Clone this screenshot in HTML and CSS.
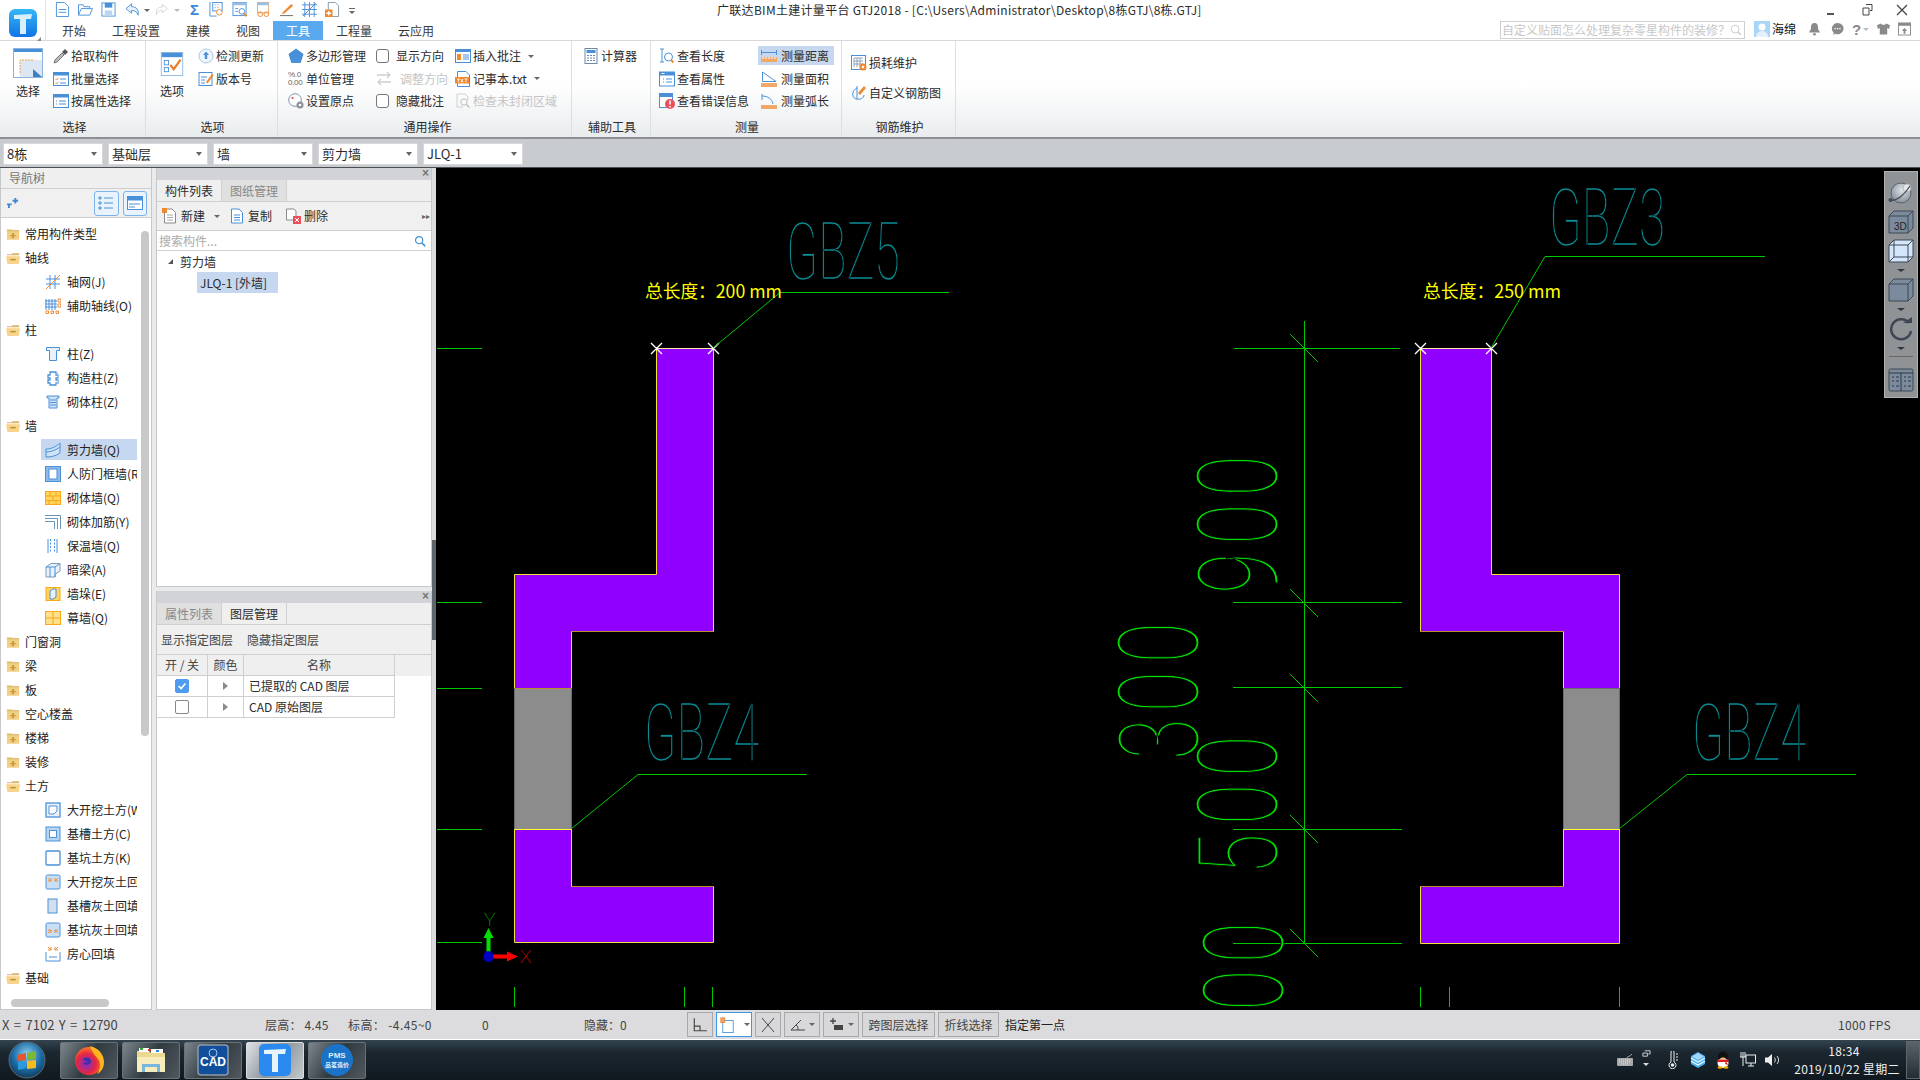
FILE: index.html
```html
<!DOCTYPE html>
<html lang="zh">
<head>
<meta charset="utf-8">
<title>广联达BIM土建计量平台 GTJ2018</title>
<link rel="stylesheet" href="styles.css">
</head>
<body>
<svg class="defs" aria-hidden="true">
  <defs>
    <linearGradient id="logoG" x1="0" y1="0" x2="0" y2="1"><stop offset="0" stop-color="#35b7f5"/><stop offset="1" stop-color="#1173e6"/></linearGradient>
    <radialGradient id="orbG" cx=".5" cy=".35" r=".7"><stop offset="0" stop-color="#8fd0ee"/><stop offset=".55" stop-color="#1d6ea8"/><stop offset="1" stop-color="#0e3350"/></radialGradient>
    <radialGradient id="foxG" cx=".4" cy=".6" r=".7"><stop offset="0" stop-color="#7b2fd0"/><stop offset=".5" stop-color="#e6263f"/><stop offset="1" stop-color="#ff9a1f"/></radialGradient>
    <radialGradient id="sphG" cx=".55" cy=".35" r=".7"><stop offset="0" stop-color="#dfe3e7"/><stop offset="1" stop-color="#7f8b97"/></radialGradient>
    <symbol id="fo" viewBox="0 0 16 14"><path d="M1 3h5l1-1h7v2H1z" fill="#d9b569"/><path d="M0 5h15l-1.500 8.500H1.500z" fill="#f6d58a"/><rect x="4.500" y="8" width="6" height="1.500" fill="#b98f3d"/></symbol>
    <symbol id="fc" viewBox="0 0 16 14"><path d="M1 2h5l1 1h7v10H1z" fill="#f2cf85"/><rect x="1" y="3" width="13" height="1" fill="#d9b569"/><path d="M6.500 6h2v2h2v1.500h-2v2h-2v-2h-2V8h2z" fill="#c89a3c"/></symbol>
    <symbol id="t-grid" viewBox="0 0 16 16"><path d="M5 1v14M10 1v14M1 5h14M1 10h14" stroke="#4a90d9" fill="none"/><path d="M1 15L15 1" stroke="#f08a30"/></symbol>
    <symbol id="t-agrid" viewBox="0 0 16 16"><path d="M1 1v11M4 1v11M7 1v11M10 1v11M0 3h12M0 6h12M0 9h12" stroke="#4a90d9" fill="none"/><path d="M13 1h3v3h-3zM13 6h3v3h-3zM1 13h2.500v2.500H1zM6 13h2.500v2.500H6zM11 13h2.500v2.500H11z" fill="none" stroke="#f08a30"/></symbol>
    <symbol id="t-col" viewBox="0 0 16 16"><path d="M1.500 1.500h13v3h-3v10h-7v-10h-3z" fill="#e9f2fb" stroke="#4a90d9"/></symbol>
    <symbol id="t-gcol" viewBox="0 0 16 16"><path d="M5 2h6v3h2v3h-2v2h2v3h-2v2H5v-2H3v-3h2V8H3V5h2z" fill="none" stroke="#4a90d9" stroke-width="1.300"/><path d="M11 1c3 1 3 12 0 14" fill="none" stroke="#b9d3ee"/></symbol>
    <symbol id="t-mcol" viewBox="0 0 16 16"><path d="M2 2h12v2h-2v10H4V4H2z" fill="#cfe2f6" stroke="#4a90d9"/><path d="M5 6h6M5 8.500h6M5 11h6" stroke="#4a90d9"/></symbol>
    <symbol id="t-wall" viewBox="0 0 16 16"><path d="M1 7c5 0 10-2 14-6v10c-4 3-9 4-14 4z" fill="#cfe2f6" stroke="#4a90d9"/><path d="M1 10c5 0 10-2 14-5" fill="none" stroke="#4a90d9"/></symbol>
    <symbol id="t-door" viewBox="0 0 16 16"><rect x=".5" y=".5" width="15" height="15" fill="#8fbbe8" stroke="#4a90d9"/><rect x="4" y="3" width="8" height="10" fill="#fff" stroke="#4a90d9"/></symbol>
    <symbol id="t-brick" viewBox="0 0 16 16"><rect x=".5" y="1.500" width="15" height="13" fill="#ffd35c" stroke="#f7a81b"/><path d="M.5 6h15M.5 10.500h15M5 1.500V6M11 1.500V6M8 6v4.500M4 10.500v4M11 10.500v4" stroke="#f7a81b" fill="none"/></symbol>
    <symbol id="t-bar" viewBox="0 0 16 16"><path d="M0 1.500h15.500V15M0 4.500h12.500V15M0 7.500h9.500V15" fill="none" stroke="#6a95bd"/></symbol>
    <symbol id="t-ins" viewBox="0 0 16 16"><path d="M3 1v14M12 1v14" stroke="#4a90d9"/><path d="M5.500 1v14M9.500 1v14" stroke="#4a90d9" stroke-dasharray="2 1.500"/></symbol>
    <symbol id="t-beam" viewBox="0 0 16 16"><path d="M1 5l5-3.500h9V9l-5 3.500v2.500H1z" fill="#e9f2fb" stroke="#7d9cbc"/><path d="M1 5h9v10M10 5l5-3.500M5 5v10" fill="none" stroke="#4a90d9"/></symbol>
    <symbol id="t-pier" viewBox="0 0 16 16"><rect x="1" y="1.500" width="14" height="13" fill="#ffd35c" stroke="#f7a81b"/><path d="M5 5l3-2h3v8l-3 2H5z" fill="#e9f2fb" stroke="#4a90d9"/></symbol>
    <symbol id="t-cw" viewBox="0 0 16 16"><rect x=".5" y="1.500" width="15" height="13" fill="#ffe08a" stroke="#f7a81b"/><path d="M8 1.500v13M.5 8h15" stroke="#f7a81b"/></symbol>
    <symbol id="t-e1" viewBox="0 0 16 16"><rect x="1" y="1" width="14" height="14" fill="#e9f2fb" stroke="#4a90d9" stroke-width="1.300"/><path d="M4 4h8v5l-3 3H4z" fill="#fff" stroke="#4a90d9"/></symbol>
    <symbol id="t-e2" viewBox="0 0 16 16"><rect x="1" y="1" width="14" height="14" fill="#b9d4f0" stroke="#4a90d9"/><rect x="4.500" y="4.500" width="7" height="7" fill="#fff" stroke="#4a90d9"/></symbol>
    <symbol id="t-e3" viewBox="0 0 16 16"><rect x="1" y="1" width="14" height="14" rx="1" fill="#fff" stroke="#4a90d9" stroke-width="1.300"/></symbol>
    <symbol id="t-e4" viewBox="0 0 16 16"><rect x="1" y="1" width="14" height="14" rx="1.500" fill="#c9dff5" stroke="#4a90d9"/><path d="M3 4l3 3M6 4v3H3M13 4l-3 3M10 4v3h3" fill="none" stroke="#f08a30"/></symbol>
    <symbol id="t-e5" viewBox="0 0 16 16"><rect x="3" y="1" width="9" height="14" fill="#d4dfec" stroke="#4a90d9"/></symbol>
    <symbol id="t-e6" viewBox="0 0 16 16"><rect x="1" y="1" width="14" height="14" rx="1.500" fill="#c9dff5" stroke="#4a90d9"/><path d="M3 11l3-3M3 8h3v3M13 11l-3-3M13 8h-3v3" fill="none" stroke="#f08a30"/></symbol>
    <symbol id="t-e7" viewBox="0 0 16 16"><path d="M1 6v9h14V6M4 11h8" fill="none" stroke="#4a90d9"/><path d="M3 1l3 3M6 1v3H3M13 1l-3 3M10 1v3h3" fill="none" stroke="#f08a30"/></symbol>
    <symbol id="r-pick" viewBox="0 0 16 16"><path d="M1 15l1-3 7-7 2 2-7 7z" fill="#bbb" stroke="#777"/><path d="M9 4l3-3 3 3-3 3z" fill="#555"/></symbol>
    <symbol id="r-batch" viewBox="0 0 16 16"><rect x=".5" y="1.500" width="15" height="13" fill="#fff" stroke="#4a90d9"/><rect x=".5" y="1.500" width="15" height="3" fill="#4a90d9"/><path d="M2.500 8l1 1 2-2M2.500 12l1 1 2-2" fill="none" stroke="#f08a30"/><path d="M7 8h6M7 12h6" stroke="#4a90d9"/></symbol>
    <symbol id="r-prop" viewBox="0 0 16 16"><rect x=".5" y="1.500" width="15" height="13" fill="#fff" stroke="#4a90d9"/><rect x=".5" y="1.500" width="15" height="3" fill="#4a90d9"/><path d="M3 8h1M3 11h1M6 8h7M6 11h7" stroke="#4a90d9"/></symbol>
    <symbol id="r-up" viewBox="0 0 16 16"><circle cx="8" cy="8" r="7" fill="#eef5fc" stroke="#a8c9ea"/><path d="M8 3.500l3 3.500H9.200v4H6.800V7H5z" fill="#4a90d9"/></symbol>
    <symbol id="r-ver" viewBox="0 0 16 16"><rect x="1" y="1.500" width="13" height="13" fill="#fff" stroke="#4a90d9"/><path d="M3 6h6M3 9h4M3 12h4" stroke="#4a90d9"/><path d="M8 11l6-8 1.500 1.500-6 8z" fill="#f08a30"/></symbol>
    <symbol id="r-poly" viewBox="0 0 16 16"><path d="M8 .5l7.500 5.500-2.800 9H3.300L.5 6z" fill="#4a90d9"/></symbol>
    <symbol id="r-orig" viewBox="0 0 16 16"><circle cx="7" cy="7" r="6.300" fill="#fff" stroke="#8095a8"/><circle cx="4.500" cy="5" r="1.100" fill="#e04040"/><circle cx="12" cy="12" r="3.500" fill="#8c9298"/><circle cx="12" cy="12" r="1.300" fill="#fff"/></symbol>
    <symbol id="r-adj" viewBox="0 0 16 16"><path d="M1 4h13M11 1l3 3-3 3M15 11H2M5 8l-3 3 3 3" fill="none" stroke="#cfcfcf" stroke-width="1.300"/></symbol>
    <symbol id="r-ins" viewBox="0 0 16 16"><rect x=".5" y="1.500" width="15" height="13" fill="#fff" stroke="#4a90d9"/><rect x="1" y="2" width="14" height="2" fill="#4a90d9"/><path d="M2 6h4v6H2z" fill="#f08a30"/><path d="M8 7h6M8 9h6M8 11h6" stroke="#4a90d9"/></symbol>
    <symbol id="r-txt" viewBox="0 0 16 16"><path d="M2.500.5H11l3.500 3.500v11.500h-12z" fill="#fff" stroke="#4a90d9"/><rect x="0" y="6" width="14" height="6.500" fill="#f08a30"/><path d="M2 8h3M3.500 8v3.500M6 8l2 3.500M8 8l-2 3.500M9.500 8h3M11 8v3.500" stroke="#fff" fill="none" stroke-width=".800"/></symbol>
    <symbol id="r-scan" viewBox="0 0 16 16"><path d="M2 1h8l3 3v3M2 1v13h6" fill="none" stroke="#cfcfcf"/><circle cx="9" cy="9" r="3.200" fill="none" stroke="#bdbdbd"/><path d="M11.500 11.500l3 3" stroke="#bdbdbd" stroke-width="1.500"/></symbol>
    <symbol id="r-calc" viewBox="0 0 16 16"><rect x="2" y=".5" width="12" height="15" fill="#fff" stroke="#6c8aa8"/><rect x="3.500" y="2" width="9" height="3" fill="#4a90d9"/><path d="M4 7.500h2M7 7.500h2M10 7.500h2M4 10h2M7 10h2M10 10h2M4 12.500h2M7 12.500h2M10 12.500h2" stroke="#6c8aa8"/></symbol>
    <symbol id="r-len" viewBox="0 0 16 16"><path d="M1 1h4M3 1v13M1 14h4" fill="none" stroke="#4a90d9"/><circle cx="9.500" cy="9" r="4" fill="#fff" stroke="#4a90d9"/><path d="M12 12l2.500 2.500" stroke="#f08a30" stroke-width="2"/></symbol>
    <symbol id="r-view" viewBox="0 0 16 16"><rect x=".5" y="1" width="15" height="14" fill="#fff" stroke="#4a90d9"/><rect x=".5" y="1" width="15" height="3.500" fill="#4a90d9"/><rect x="2.500" y="2" width="3" height="1" fill="#fff"/><path d="M4 8h1M4 11h1M7 8h6M7 11h6" stroke="#4a90d9"/></symbol>
    <symbol id="r-err" viewBox="0 0 16 16"><rect x=".5" y=".5" width="13" height="14" fill="#fff" stroke="#4a90d9"/><rect x=".5" y=".5" width="13" height="3.500" fill="#4a90d9"/><circle cx="11" cy="11" r="5" fill="#e8505a"/><path d="M11 7.500v4M11 13v1.500" stroke="#fff" stroke-width="1.500"/></symbol>
    <symbol id="r-dist" viewBox="0 0 16 16"><path d="M.5 2v5M15.500 2v5M.5 4.500h15" fill="none" stroke="#4a90d9"/><rect x="0" y="9" width="16" height="5" fill="#f1a868"/><path d="M2 9v2M5 9v2M8 9v2M11 9v2M14 9v2" stroke="#fff"/></symbol>
    <symbol id="r-area" viewBox="0 0 16 16"><path d="M1.500 1v9.500H15z" fill="#fff" stroke="#4a90d9"/><rect x="0" y="12" width="16" height="4" fill="#f1a868"/></symbol>
    <symbol id="r-arc" viewBox="0 0 16 16"><path d="M1 1v6M1 3c6 0 10 3 11 8" fill="none" stroke="#4a90d9"/><rect x="0" y="12" width="16" height="4" fill="#f1a868"/></symbol>
    <symbol id="r-loss" viewBox="0 0 16 16"><rect x=".5" y=".5" width="14" height="14" fill="#fff" stroke="#4a90d9"/><path d="M3 3v9M6 3v9M9 3v9M3 3h9M3 6h9M3 9h9" stroke="#8da2b8" fill="none"/><circle cx="12" cy="12" r="3.500" fill="#f08a30"/><circle cx="12" cy="12" r="1.300" fill="#fff"/></symbol>
    <symbol id="r-reb" viewBox="0 0 16 16"><path d="M6 3C1 5 0 12 5 14c4 1 8-1 8-4" fill="none" stroke="#4a90d9"/><path d="M6 1v13" stroke="#4a90d9"/><path d="M7 8l6-7 2 2-6 7z" fill="#f08a30"/></symbol>
  </defs>
</svg>

<div class="app">
  <header class="top">
    <div class="logo-col">
      <svg class="logo" viewBox="0 0 30 30"><rect x="1" width="28" height="28" rx="6" fill="url(#logoG)"/><path d="M6 6l18-1-1 5-5 0v15h-6V10H6z" fill="#d6f0fb"/></svg>
      <span class="logo-grip"></span>
    </div>
    <div class="top-main">
      <div class="title-row">
        <div class="quick">
          <svg class="q" viewBox="0 0 16 16"><path d="M1.500.5H10l4.500 4.500v10.500h-13z" fill="#fff" stroke="#4a90d9"/><path d="M4 8h8M4 11h8" stroke="#4a90d9"/></svg>
          <svg class="q" viewBox="0 0 16 16"><path d="M.5 14V3h5l1 2h6v2" fill="none" stroke="#4a90d9"/><path d="M.5 14l3-7h12l-3 7z" fill="#fff" stroke="#4a90d9"/></svg>
          <svg class="q" viewBox="0 0 16 16"><rect x="1" y="1" width="14" height="14" fill="#fff" stroke="#4a90d9"/><rect x="4" y="1" width="8" height="5" fill="#4a90d9"/><rect x="4" y="9" width="8" height="6" fill="#bcd6f0"/></svg>
          <svg class="q q-undo" viewBox="0 0 18 16"><path d="M8 2L2 7l6 5V9c4 0 6 2 7 5 1-6-2-9-7-9z" fill="#e9f2fb" stroke="#4a90d9"/></svg>
          <i class="caret"></i>
          <svg class="q q-redo" viewBox="0 0 18 16"><path d="M10 2l6 5-6 5V9c-4 0-6 2-7 5-1-6 2-9 7-9z" fill="#fff" stroke="#cfcfcf"/></svg>
          <i class="caret light"></i>
          <span class="q-sigma">Σ</span>
          <svg class="q q-7" viewBox="0 0 16 16"><path d="M1 0v15h7" fill="none" stroke="#4a90d9"/><rect x="4" y=".5" width="10" height="9" fill="#fff" stroke="#4a90d9"/><path d="M6 3h1M9 3h1M6 6h1M9 6h1" stroke="#4a90d9"/><circle cx="11" cy="11" r="3" fill="#fff" stroke="#f08a30"/></svg>
          <svg class="q q-8" viewBox="0 0 16 16"><rect x=".5" y=".5" width="14" height="14" fill="#fff" stroke="#4a90d9"/><rect x=".5" y=".5" width="14" height="3" fill="#9bbfe3"/><path d="M3 7h3M3 10h3" stroke="#4a90d9"/><circle cx="10" cy="10" r="3" fill="#fff" stroke="#4a90d9"/><path d="M12 12l3 3" stroke="#f08a30" stroke-width="2"/></svg>
          <svg class="q q-9" viewBox="0 0 16 16"><rect x="1.500" y=".5" width="12" height="11" fill="#fff" stroke="#e8a873"/><rect x="1.500" y=".5" width="12" height="3" fill="#9bbfe3"/><circle cx="4.500" cy="13" r="2.500" fill="none" stroke="#f08a30"/><circle cx="11" cy="13" r="2.500" fill="none" stroke="#f08a30"/></svg>
          <svg class="q q-10" viewBox="0 0 16 16"><path d="M1 14.500h14" stroke="#666"/><path d="M4 11L13 2l2 2-9 8-3 1z" fill="#f08a30"/></svg>
          <svg class="q q-11" viewBox="0 0 16 16"><path d="M3 0v16M8 0v16M13 0v16M0 3h16M0 8h16M0 13h16" stroke="#4a90d9"/><path d="M1 15L15 1" stroke="#4a90d9"/></svg>
          <svg class="q q-12" viewBox="0 0 16 16"><path d="M3.500.5H11l3.500 3.500v11.500h-11z" fill="#fff" stroke="#8097ad"/><rect x="0" y="8" width="8" height="8" fill="#f08a30"/><path d="M4 9.500v5M1.500 12h5" stroke="#fff" stroke-width="1.500"/></svg>
          <i class="more"></i>
        </div>
        <div class="title">广联达BIM土建计量平台 GTJ2018 - [C:\Users\Administrator\Desktop\8栋GTJ\8栋.GTJ]</div>
        <div class="win">
          <svg class="win-b" viewBox="0 0 14 14"><rect x="2" y="10" width="7" height="2" fill="#555"/></svg>
          <svg class="win-b" viewBox="0 0 14 14"><path d="M5 1.500h6v6H9M2 5h6v7H2z" fill="#fff" stroke="#444"/></svg>
          <svg class="win-b" viewBox="0 0 14 14"><path d="M2 2l10 10M12 2L2 12" stroke="#444" stroke-width="1.300"/></svg>
        </div>
      </div>
      <div class="tab-row">
        <nav class="tabs">
          <span class="tab">开始</span><span class="tab">工程设置</span><span class="tab">建模</span><span class="tab">视图</span><span class="tab active">工具</span><span class="tab">工程量</span><span class="tab">云应用</span>
        </nav>
        <div class="search">
          <span class="search-t">自定义贴面怎么处理复杂零星构件的装修？</span>
          <svg class="search-i" viewBox="0 0 14 14"><circle cx="6" cy="6" r="4.500" fill="none" stroke="#c4c4c4"/><path d="M9.500 9.500l3 3" stroke="#c4c4c4" stroke-width="1.500"/></svg>
        </div>
        <svg class="avatar" viewBox="0 0 16 16"><rect width="16" height="16" fill="#a9d6f7"/><circle cx="8" cy="6" r="3.500" fill="#fff"/><path d="M2 16c0-4 3-6 6-6s6 2 6 6z" fill="#e2f1fc"/></svg>
        <span class="uname">海绵</span>
        <svg class="ti ti-bell" viewBox="0 0 14 16"><path d="M7 1c3 0 4 2 4 5 0 3 1 4 2 5v1H1v-1c1-1 2-2 2-5 0-3 1-5 4-5z" fill="#8a8a8a"/><circle cx="7" cy="14" r="1.500" fill="#8a8a8a"/></svg>
        <svg class="ti ti-chat" viewBox="0 0 16 16"><path d="M8 1a7 6.500 0 1 1-3 12.400L3 15l.6-3A7 6.500 0 0 1 8 1z" fill="#8a8a8a"/><path d="M4.500 7.500h1.500M7.300 7.500h1.500M10 7.500h1.500" stroke="#fff" stroke-width="1.500"/></svg>
        <span class="ti-q">?</span><i class="caret light ti-qc"></i>
        <svg class="ti ti-shirt" viewBox="0 0 14 14"><path d="M4 1L0 3l1 4 2-1v7h8V6l2 1 1-4-4-2c-1 2-5 2-6 0z" fill="#8a8a8a"/></svg>
        <svg class="ti ti-box" viewBox="0 0 14 14"><rect x=".5" y=".5" width="13" height="13" fill="#fff" stroke="#8a8a8a"/><rect x=".5" y=".5" width="13" height="3" fill="#8a8a8a"/><path d="M7 6l3 3H8v3H6V9H4z" fill="#8a8a8a"/></svg>
      </div>
    </div>
  </header>

  <section class="ribbon">
    <div class="grp g1">
      <div class="g-body">
        <div class="large lg1">
          <svg class="lg-i" viewBox="0 0 30 30"><rect x=".5" y=".5" width="29" height="29" fill="#fff" stroke="#8ab4dd"/><rect x="1" y="1" width="28" height="3" fill="#4a90d9"/><rect x="7" y="12" width="22" height="17" fill="#dde7f3"/><path d="M7 25V12h14" fill="none" stroke="#f2a444" stroke-dasharray="2 1"/><path d="M20 21l9 8h-9z" fill="#3f7fc4"/></svg>
          <span>选择</span>
        </div>
        <div class="col c1-2">
          <div class="it"><svg class="ic"><use href="#r-pick"/></svg><span>拾取构件</span></div>
          <div class="it"><svg class="ic"><use href="#r-batch"/></svg><span>批量选择</span></div>
          <div class="it"><svg class="ic"><use href="#r-prop"/></svg><span>按属性选择</span></div>
        </div>
      </div>
      <div class="g-label">选择</div>
    </div>
    <div class="grp g2">
      <div class="g-body">
        <div class="large lg2">
          <svg class="lg-i lg-i2" viewBox="0 0 26 28"><rect x=".5" y=".5" width="25" height="27" fill="#fff" stroke="#8ab4dd"/><rect x="1" y="1" width="24" height="5" fill="#4a90d9"/><rect x="4" y="10" width="5" height="5" fill="none" stroke="#4a90d9"/><rect x="4" y="18" width="5" height="5" fill="none" stroke="#4a90d9"/><path d="M11 15l4 5 8-11" fill="none" stroke="#e8792a" stroke-width="2.500"/></svg>
          <span>选项</span>
        </div>
        <div class="col c2-2">
          <div class="it"><svg class="ic"><use href="#r-up"/></svg><span>检测更新</span></div>
          <div class="it"><svg class="ic"><use href="#r-ver"/></svg><span>版本号</span></div>
        </div>
      </div>
      <div class="g-label">选项</div>
    </div>
    <div class="grp g3">
      <div class="g-body">
        <div class="col c3-1">
          <div class="it"><svg class="ic"><use href="#r-poly"/></svg><span>多边形管理</span></div>
          <div class="it"><span class="unit-ic">%.0<br>0.00</span><span>单位管理</span></div>
          <div class="it"><svg class="ic"><use href="#r-orig"/></svg><span>设置原点</span></div>
        </div>
        <div class="col c3-2">
          <div class="it it-w"><i class="chk"></i><span>显示方向</span></div>
          <div class="it it-w off"><svg class="ic"><use href="#r-adj"/></svg><span>调整方向</span></div>
          <div class="it it-w"><i class="chk"></i><span>隐藏批注</span></div>
        </div>
        <div class="col c3-3">
          <div class="it"><svg class="ic"><use href="#r-ins"/></svg><span>插入批注</span><i class="caret it-c"></i></div>
          <div class="it"><svg class="ic"><use href="#r-txt"/></svg><span>记事本.txt</span><i class="caret it-c"></i></div>
          <div class="it off"><svg class="ic"><use href="#r-scan"/></svg><span>检查未封闭区域</span></div>
        </div>
      </div>
      <div class="g-label">通用操作</div>
    </div>
    <div class="grp g4">
      <div class="g-body">
        <div class="col c4-1">
          <div class="it"><svg class="ic"><use href="#r-calc"/></svg><span>计算器</span></div>
        </div>
      </div>
      <div class="g-label">辅助工具</div>
    </div>
    <div class="grp g5">
      <div class="g-body">
        <div class="col c5-1">
          <div class="it"><svg class="ic"><use href="#r-len"/></svg><span>查看长度</span></div>
          <div class="it"><svg class="ic"><use href="#r-view"/></svg><span>查看属性</span></div>
          <div class="it"><svg class="ic"><use href="#r-err"/></svg><span>查看错误信息</span></div>
        </div>
        <div class="col c5-2">
          <div class="it sel"><svg class="ic"><use href="#r-dist"/></svg><span>测量距离</span></div>
          <div class="it"><svg class="ic"><use href="#r-area"/></svg><span>测量面积</span></div>
          <div class="it"><svg class="ic"><use href="#r-arc"/></svg><span>测量弧长</span></div>
        </div>
      </div>
      <div class="g-label">测量</div>
    </div>
    <div class="grp g6">
      <div class="g-body">
        <div class="col c6-1">
          <div class="it"><svg class="ic"><use href="#r-loss"/></svg><span>损耗维护</span></div>
          <div class="it"><svg class="ic"><use href="#r-reb"/></svg><span>自定义钢筋图</span></div>
        </div>
      </div>
      <div class="g-label">钢筋维护</div>
    </div>
  </section>

  <section class="combos">
    <div class="combo"><span>8栋</span><i class="caret"></i></div>
    <div class="combo"><span>基础层</span><i class="caret"></i></div>
    <div class="combo"><span>墙</span><i class="caret"></i></div>
    <div class="combo"><span>剪力墙</span><i class="caret"></i></div>
    <div class="combo"><span>JLQ-1</span><i class="caret"></i></div>
  </section>

  <main class="main">
    <aside class="nav">
      <div class="nav-head">导航树</div>
      <div class="nav-tools">
        <svg class="pin" viewBox="0 0 14 12"><path d="M0 6h5v2H3v3H1V8H0zM6 2h2V0h2v2h2v2h-2v2H8V4H6z" fill="#3f86d6"/></svg>
        <span class="nav-btn"><svg viewBox="0 0 16 14"><path d="M1 1h2v2H1zM1 6h2v2H1zM1 11h2v2H1z" fill="none" stroke="#4a90d9"/><path d="M6 2h9M6 7h9M6 12h9" stroke="#4a90d9"/></svg></span>
        <span class="nav-btn"><svg viewBox="0 0 16 14"><rect x=".5" y=".5" width="15" height="13" fill="#fff" stroke="#4a90d9"/><rect x=".5" y=".5" width="15" height="4" fill="#4a90d9"/><path d="M2 8h11M2 11h6" stroke="#4a90d9"/></svg></span>
      </div>
      <div class="tree">
        <div class="tr root"><svg class="fd"><use href="#fc"/></svg><span>常用构件类型</span></div>
        <div class="tr root"><svg class="fd"><use href="#fo"/></svg><span>轴线</span></div>
        <div class="tr"><svg class="ic"><use href="#t-grid"/></svg><span>轴网(J)</span></div>
        <div class="tr"><svg class="ic"><use href="#t-agrid"/></svg><span>辅助轴线(O)</span></div>
        <div class="tr root"><svg class="fd"><use href="#fo"/></svg><span>柱</span></div>
        <div class="tr"><svg class="ic"><use href="#t-col"/></svg><span>柱(Z)</span></div>
        <div class="tr"><svg class="ic"><use href="#t-gcol"/></svg><span>构造柱(Z)</span></div>
        <div class="tr"><svg class="ic"><use href="#t-mcol"/></svg><span>砌体柱(Z)</span></div>
        <div class="tr root"><svg class="fd"><use href="#fo"/></svg><span>墙</span></div>
        <div class="tr on"><svg class="ic"><use href="#t-wall"/></svg><span>剪力墙(Q)</span></div>
        <div class="tr"><svg class="ic"><use href="#t-door"/></svg><span>人防门框墙(RF)</span></div>
        <div class="tr"><svg class="ic"><use href="#t-brick"/></svg><span>砌体墙(Q)</span></div>
        <div class="tr"><svg class="ic"><use href="#t-bar"/></svg><span>砌体加筋(Y)</span></div>
        <div class="tr"><svg class="ic"><use href="#t-ins"/></svg><span>保温墙(Q)</span></div>
        <div class="tr"><svg class="ic"><use href="#t-beam"/></svg><span>暗梁(A)</span></div>
        <div class="tr"><svg class="ic"><use href="#t-pier"/></svg><span>墙垛(E)</span></div>
        <div class="tr"><svg class="ic"><use href="#t-cw"/></svg><span>幕墙(Q)</span></div>
        <div class="tr root"><svg class="fd"><use href="#fc"/></svg><span>门窗洞</span></div>
        <div class="tr root"><svg class="fd"><use href="#fc"/></svg><span>梁</span></div>
        <div class="tr root"><svg class="fd"><use href="#fc"/></svg><span>板</span></div>
        <div class="tr root"><svg class="fd"><use href="#fc"/></svg><span>空心楼盖</span></div>
        <div class="tr root"><svg class="fd"><use href="#fc"/></svg><span>楼梯</span></div>
        <div class="tr root"><svg class="fd"><use href="#fc"/></svg><span>装修</span></div>
        <div class="tr root"><svg class="fd"><use href="#fo"/></svg><span>土方</span></div>
        <div class="tr"><svg class="ic"><use href="#t-e1"/></svg><span>大开挖土方(W)</span></div>
        <div class="tr"><svg class="ic"><use href="#t-e2"/></svg><span>基槽土方(C)</span></div>
        <div class="tr"><svg class="ic"><use href="#t-e3"/></svg><span>基坑土方(K)</span></div>
        <div class="tr"><svg class="ic"><use href="#t-e4"/></svg><span>大开挖灰土回填</span></div>
        <div class="tr"><svg class="ic"><use href="#t-e5"/></svg><span>基槽灰土回填</span></div>
        <div class="tr"><svg class="ic"><use href="#t-e6"/></svg><span>基坑灰土回填</span></div>
        <div class="tr"><svg class="ic"><use href="#t-e7"/></svg><span>房心回填</span></div>
        <div class="tr root"><svg class="fd"><use href="#fo"/></svg><span>基础</span></div>
      </div>
      <i class="vbar"></i>
      <i class="hbar"></i>
    </aside>

    <div class="mid">
      <section class="panel p-top">
        <div class="p-head"><i class="x">×</i></div>
        <div class="p-tabs"><span class="p-tab cur">构件列表</span><span class="p-tab">图纸管理</span></div>
        <div class="p-tools">
          <span class="pt"><svg class="ic" viewBox="0 0 16 16"><path d="M2.500 1H10l3.500 3.500V15h-11z" fill="#fff" stroke="#8a8a8a"/><path d="M5 7h6M5 9.500h6M5 12h6" stroke="#aaa"/><rect x="0" y="0" width="5" height="5" fill="#f08a30"/></svg><span>新建</span><i class="caret"></i></span>
          <span class="pt"><svg class="ic" viewBox="0 0 16 16"><path d="M2.500 1H10l3.500 3.500V15h-11z" fill="#fff" stroke="#4a90d9"/><path d="M5 7h6M5 9.500h6M5 12h6" stroke="#4a90d9"/></svg><span>复制</span></span>
          <span class="pt"><svg class="ic" viewBox="0 0 16 16"><path d="M1.500 1H9l2 2v9H1.500z" fill="#fff" stroke="#8a8a8a"/><rect x="8" y="8" width="8" height="8" fill="#e8505a"/><path d="M10 10l4 4M14 10l-4 4" stroke="#fff"/></svg><span>删除</span></span>
          <span class="p-more">▸▸</span>
        </div>
        <div class="p-search"><span>搜索构件...</span><svg class="p-s-i" viewBox="0 0 14 14"><circle cx="6" cy="6" r="4.200" fill="none" stroke="#3d8fd6" stroke-width="1.400"/><path d="M9 9l4 4" stroke="#3d8fd6" stroke-width="1.800"/></svg></div>
        <div class="p-tree">
          <div class="pn-root"><i class="tri"></i><span>剪力墙</span></div>
          <div class="pn-child">JLQ-1 [外墙]</div>
        </div>
      </section>
      <section class="panel p-bot">
        <div class="p-head"><i class="x">×</i></div>
        <div class="p-tabs"><span class="p-tab">属性列表</span><span class="p-tab cur">图层管理</span></div>
        <div class="layer-tools"><span>显示指定图层</span><span>隐藏指定图层</span></div>
        <div class="lt-head"><span class="lc1">开 / 关</span><span class="lc2">颜色</span><span class="lc3">名称</span></div>
        <div class="lt-row"><span class="lc1"><i class="box on"><svg viewBox="0 0 14 14"><path d="M3 7l3 3 5-6" fill="none" stroke="#fff" stroke-width="2"/></svg></i></span><span class="lc2"><i class="tri-r"></i></span><span class="lc3 left">已提取的 CAD 图层</span></div>
        <div class="lt-row"><span class="lc1"><i class="box"></i></span><span class="lc2"><i class="tri-r"></i></span><span class="lc3 left">CAD 原始图层</span></div>
      </section>
    </div>

    <div class="splitter"><i class="grip"></i></div>

    <div class="canvas">
      <svg class="cad" viewBox="436 168 1484 842" preserveAspectRatio="none">
        <g class="walls">
          <path class="p" d="M656.500 348.500H713.500V631.500H571.500V688.500H514.500V574.500H656.500Z"/>
          <rect class="g" x="514.500" y="688.500" width="57" height="141"/>
          <path class="p" d="M514.500 829.500H571.500V886.500H713.500V942.500H514.500Z"/>
          <path class="p" d="M1420.500 348.500H1491.500V574.500H1619.500V688.500H1563.500V631.500H1420.500Z"/>
          <rect class="g" x="1563.500" y="688.500" width="56" height="141"/>
          <path class="p" d="M1563.500 829.500H1619.500V943.500H1420.500V886.500H1563.500Z"/>
          <path class="ol" d="M571.500 631.500H713.500M571.500 886.500H713.500M1420.500 631.500H1563.500M1420.500 886.500H1563.500M514.500 688.500H571.500"/>
          <path class="yl" d="M514.500 829.500H571.500M1563.500 829.500H1619.500"/>
          <path class="wh" d="M656.500 348.500H713.500M1420.500 348.500H1491.500"/>
        </g>
        <g class="marks">
          <path d="M651 343l11 11M662 343l-11 11M708 343l11 11M719 343l-11 11M1415 343l11 11M1426 343l-11 11M1486 343l11 11M1497 343l-11 11"/>
        </g>
        <g class="ln">
          <path d="M437 348.500H482M437 602.500H482M437 688.500H482M437 829.500H482M437 942.500H482"/>
          <path d="M514.500 987V1007M684.500 987V1007M712.500 987V1007M1420.500 987V1007M1449.500 987V1007M1619.500 987V1007"/>
          <path d="M713 348L780 292.500H949"/>
          <path d="M1491 348L1545 256.500H1765"/>
          <path d="M571 829L638 774.500H807"/>
          <path d="M1619 829L1687 774.500H1856"/>
          <path d="M1304.500 321V943"/>
          <path d="M1234 348.500H1400M1233 602.500H1402M1233 687.500H1402M1233 829.500H1402M1233 943.500H1402"/>
          <path d="M1290 334l28 28M1290 589l28 28M1290 674l28 28M1290 815l28 28M1290 929l28 28"/>
        </g>
        <g class="lbl">
          <text x="786" y="279" textLength="114" lengthAdjust="spacingAndGlyphs">GBZ5</text>
          <text x="1549" y="245" textLength="116" lengthAdjust="spacingAndGlyphs">GBZ3</text>
          <text x="644" y="760" textLength="115" lengthAdjust="spacingAndGlyphs">GBZ4</text>
          <text x="1692" y="760" textLength="114" lengthAdjust="spacingAndGlyphs">GBZ4</text>
        </g>
        <g class="dim">
          <text transform="translate(1277 594) rotate(-90) scale(.68 1)" x="0 72 143">900</text>
          <text transform="translate(1198 760) rotate(-90) scale(.68 1)" x="0 70 142">300</text>
          <text transform="translate(1277 875) rotate(-90) scale(.68 1)" x="0 73 144">500</text>
          <text transform="translate(1283 1011) rotate(-90) scale(.68 1)" x="0 70">00</text>
        </g>
        <text class="len" x="645" y="298" textLength="137" lengthAdjust="spacingAndGlyphs">总长度：200 mm</text>
        <text class="len" x="1423" y="298" textLength="138" lengthAdjust="spacingAndGlyphs">总长度：250 mm</text>
        <g class="axis">
          <path class="ax-g" d="M488.500 956V938"/><path class="ax-gh" d="M488.500 928l5 10h-10z"/>
          <path class="ax-r" d="M490 956.500H507"/><path class="ax-rh" d="M518 956.500l-11-5v10z"/>
          <ellipse cx="488.500" cy="956.500" rx="5" ry="5.500" fill="#0000c0"/>
          <text class="ax-x" x="520" y="963">X</text><text class="ax-y" x="484" y="926">Y</text>
        </g>
      </svg>
      <div class="viewbar">
        <svg class="vb" viewBox="0 0 26 24"><circle cx="13" cy="12" r="10" fill="url(#sphG)" stroke="#5a636c"/><circle cx="19" cy="7" r="4" fill="#e6e8ea" stroke="#9aa2aa" stroke-width=".600"/><path d="M1 19c8 2 16-6 21-14" fill="none" stroke="#444c55" stroke-width="1.300"/><circle cx="2.500" cy="19" r="2" fill="#444c55"/></svg>
        <svg class="vb" viewBox="0 0 26 24"><path d="M1 6l5-5h19v17l-5 5H1z" fill="#7b8b9d" stroke="#3d4652"/><path d="M1 6h19v17M20 6l5-5" fill="none" stroke="#3d4652"/><text class="vb-t" x="6" y="20">3D</text></svg>
        <svg class="vb" viewBox="0 0 26 24"><path d="M1 6l5-5h19v17l-5 5H1z" fill="#d4e6fb" stroke="#3d4652"/><path d="M1 6h19v17M20 6l5-5M6 1v17h19M6 18l-5 5" fill="none" stroke="#3d4652"/></svg>
        <i class="vb-ar"></i>
        <svg class="vb" viewBox="0 0 26 24"><path d="M1 6l5-5h19v17l-5 5H1z" fill="#7b8b9d" stroke="#3d4652"/><path d="M1 6h19v17M20 6l5-5" fill="none" stroke="#3d4652"/></svg>
        <i class="vb-ar"></i>
        <svg class="vb" viewBox="0 0 26 24"><path d="M21 6A10 10 0 1 0 23 14" fill="none" stroke="#3d4652" stroke-width="2.500"/><path d="M15 6h9V0z" fill="#3d4652"/></svg>
        <i class="vb-ar"></i>
        <i class="vb-sep"></i>
        <svg class="vb" viewBox="0 0 26 24"><rect x="1" y="1" width="24" height="22" rx="1.500" fill="#7b8b9d" stroke="#3d4652"/><path d="M1 5h24M13 5v18M4 9h2M8 9h3M4 13h2M8 13h3M4 18h2M8 18h3M16 9h2M20 9h3M16 13h2M20 13h3M16 18h2M20 18h3" stroke="#2f3640"/></svg>
      </div>
    </div>
  </main>

  <footer class="status">
    <span class="st s-xy">X = 7102 Y = 12790</span>
    <span class="st s-h1">层高： 4.45</span>
    <span class="st s-h2">标高： -4.45~0</span>
    <span class="st s-0">0</span>
    <span class="st s-hide">隐藏：0</span>
    <span class="sb"><svg viewBox="0 0 14 14"><path d="M2 1v11h11M2 8h5v4" fill="none" stroke="#444"/></svg></span>
    <span class="sb sb-act"><svg viewBox="0 0 20 20"><rect x="3.500" y="4.500" width="13" height="15" fill="#fff" stroke="#3d87d8"/><rect x="1" y="1" width="5" height="6" fill="#f4a360" stroke="#e58b3e"/></svg><i class="caret"></i></span>
    <span class="sb"><svg viewBox="0 0 16 16"><path d="M2 1l12 14M14 1L2 15" stroke="#444" fill="none"/></svg></span>
    <span class="sb sb-w"><svg viewBox="0 0 16 14"><path d="M1 12L11 2M1 12h14" stroke="#444" fill="none"/><path d="M6 7c2 1 2 3 2 5" stroke="#444" fill="none"/></svg><i class="caret"></i></span>
    <span class="sb sb-w"><svg viewBox="0 0 16 14"><path d="M1 3h6M4 0v6" stroke="#444" fill="none" stroke-width="1.300"/><rect x="5" y="7" width="9" height="5" fill="#444"/></svg><i class="caret"></i></span>
    <span class="sb sb-t1">跨图层选择</span>
    <span class="sb sb-t2">折线选择</span>
    <span class="st s-prompt">指定第一点</span>
    <span class="st s-fps">1000 FPS</span>
  </footer>

  <footer class="taskbar">
    <svg class="orb" viewBox="0 0 38 38"><circle cx="19" cy="19" r="18" fill="url(#orbG)" stroke="#5a6a74"/><path d="M10 14l8-2v7l-8 1z" fill="#e8552c"/><path d="M19 12l9-2v8l-9 1z" fill="#7cb92f"/><path d="M10 21l8-1v7l-8 2z" fill="#2a9be0"/><path d="M19 20l9-1v8l-9 1z" fill="#f7bb20"/></svg>
    <div class="tb-btns">
      <span class="tb"><svg viewBox="0 0 32 32"><circle cx="16" cy="17" r="14" fill="url(#foxG)"/><path d="M17 2c8 2 14 8 14 16 0 6-3 10-7 12 4-5 4-11 1-15-2-3-5-5-8-13z" fill="#ffb51f"/><path d="M10 15c3-3 8-1 8 2 0 4-6 5-8 2l6-1c-3-1-5-1-6-3z" fill="#3c2fa8"/></svg></span>
      <span class="tb"><svg viewBox="0 0 32 32"><path d="M2 7h12l2 2h14v19H2z" fill="#ecd890"/><rect x="4" y="4" width="10" height="4" fill="#fff"/><rect x="16" y="5" width="12" height="4" fill="#fff"/><rect x="5" y="4" width="3" height="2" fill="#37a83a"/><rect x="13" y="5" width="3" height="2" fill="#d8362a"/><rect x="21" y="6" width="3" height="2" fill="#2b8ad8"/><path d="M2 13h28v15H2z" fill="#f7ecbc"/><path d="M7 20h18v8h-3v-5H10v5H7z" fill="#7ab6dc"/></svg></span>
      <span class="tb"><svg viewBox="0 0 32 32"><rect x="1" y="1" width="30" height="30" rx="3" fill="#114f9c" stroke="#8d9aa5" stroke-width="1.500"/><text class="tb-cad" x="16" y="22" text-anchor="middle">CAD</text><circle cx="16" cy="9" r="4" fill="none" stroke="#9ec8f2"/></svg></span>
      <span class="tb tb-on"><svg viewBox="0 0 32 32"><rect x="0" y="0" width="32" height="32" rx="5" fill="#2b8af0"/><path d="M5 6l22-1-1 5-7 0v18h-6V10H5z" fill="#e6f4fc"/></svg></span>
      <span class="tb"><svg viewBox="0 0 32 32"><circle cx="16" cy="16" r="16" fill="#1a73c8"/><text class="tb-pms" x="16" y="14" text-anchor="middle">PMS</text><text class="tb-pm2" x="16" y="23" text-anchor="middle">品茗造价</text></svg></span>
    </div>
    <div class="tray">
      <svg class="tr-i tr-kb" viewBox="0 0 16 14"><rect x="0" y="5" width="16" height="8" rx="1" fill="#a9a9a9"/><path d="M2 7h12M2 9h12M4 11h8" stroke="#e5e5e5" stroke-dasharray="1 1"/><path d="M10 5c0-2 3-1 5-4" fill="none" stroke="#a9a9a9"/></svg>
      <div class="tr-up"><svg viewBox="0 0 10 7"><path d="M3 .5h6v3.500H7M1 3h5v3.500H1z" fill="none" stroke="#ddd"/></svg><i></i></div>
      <svg class="tr-i tr-th" viewBox="0 0 12 18"><path d="M4 1a1.500 1.500 0 0 1 3 0v10a3.500 3.500 0 1 1-3 0z" fill="none" stroke="#eee"/><circle cx="5.500" cy="14" r="1.800" fill="#eee"/><path d="M9 3h2M9 6h2M9 9h2" stroke="#eee"/></svg>
      <svg class="tr-i tr-cube" viewBox="0 0 16 16"><path d="M8 0l7 4v8l-7 4-7-4V4z" fill="#4bb0f0"/><path d="M1 6l7 4 7-4M1 9l7 4 7-4" fill="none" stroke="#e9f6ff" stroke-width="1.300"/><path d="M8 1l6 3.500-6 3.500-6-3.500z" fill="#9fd8fb"/></svg>
      <svg class="tr-i tr-qq" viewBox="0 0 16 18"><ellipse cx="8" cy="6" rx="5" ry="5.500" fill="#111"/><ellipse cx="8" cy="12" rx="5.500" ry="5" fill="#fff"/><rect x="2.500" y="8.500" width="11" height="2.500" fill="#e02020"/><path d="M11 10l2 4-3-1z" fill="#e02020"/><ellipse cx="5" cy="16.500" rx="2.500" ry="1.300" fill="#f5a800"/><ellipse cx="11" cy="16.500" rx="2.500" ry="1.300" fill="#f5a800"/><path d="M6 6.500h4l-2 1.500z" fill="#f5a800"/></svg>
      <svg class="tr-i tr-net" viewBox="0 0 16 16"><path d="M1 0v5M3 0v5M5 0v5M0 5h6M3 5v9" stroke="#eee" fill="none"/><rect x="6" y="3" width="9.500" height="8" fill="none" stroke="#eee"/><path d="M8 14h6M11 11v3" stroke="#eee"/></svg>
      <svg class="tr-i tr-vol" viewBox="0 0 16 14"><path d="M0 4.500h3L7 1v12L3 9.500H0z" fill="#eee"/><path d="M9.500 4.500c1 1.500 1 3.500 0 5M12 3c2 2.500 2 5.500 0 8" fill="none" stroke="#ddd"/></svg>
      <div class="clock"><span>18:34</span><span>2019/10/22 星期二</span></div>
      <i class="show-desk"></i>
    </div>
  </footer>
</div>
</body>
</html>
```

FILE: styles.css
```css
* { box-sizing: border-box; }
html, body { margin: 0; padding: 0; width: 1920px; height: 1080px; overflow: hidden; }
body { font-family: "Noto Sans CJK SC", "Liberation Sans", sans-serif; font-size: 12px; color: #2b2b2b; line-height: 16px; background: #e4e5e7; }
i { display: block; font-style: normal; }
svg { display: block; flex: none; }
.defs { position: absolute; width: 0; height: 0; }
.app { width: 1920px; height: 1080px; display: flex; flex-direction: column; }

/* top strip */
.top { height: 41px; display: flex; background: #fff; border-bottom: 1px solid #d8d8d8; flex: none; }
.logo-col { width: 46px; position: relative; border-right: 1px solid #e4e4e4; padding: 9px 0 0 8px; height: 40px; }
.logo { width: 30px; height: 30px; }
.logo-grip { position: absolute; right: 4px; bottom: -1px; border-left: 4px solid transparent; border-bottom: 4px solid #888; }
.top-main { flex: 1; display: flex; flex-direction: column; }
.title-row { height: 21px; display: flex; align-items: center; position: relative; }
.quick { width: 671px; height: 21px; display: flex; align-items: center; padding-left: 9px; }
.q { width: 15px; height: 15px; margin-right: 8px; margin-top: -2px; }
.q-undo { width: 17px; margin-right: 3px; }
.q-redo { width: 15px; margin-left: 4px; margin-right: 5px; }
.q-sigma { color: #3d87d8; font: bold 15px "Liberation Sans", sans-serif; width: 12px; margin: -2px 0 0 10px; }
.q-7 { margin-left: 7px; }
.q-8 { width: 16px; }
.more { width: 6px; height: 6px; margin: 0 0 0 1px; border-top: 1px solid #666; position: relative; }
.more::after { content: ""; position: absolute; left: 0; top: 2px; border-left: 3px solid transparent; border-right: 3px solid transparent; border-top: 3px solid #666; }
.title { width: 1116px; font-size: 12px; color: #2b2b2b; white-space: nowrap; line-height: 18px; margin-top: -2px; letter-spacing: .3px; }
.win { display: flex; position: absolute; right: 0; top: 1px; }
.win-b { width: 14px; height: 14px; margin: 2px 11px 0 0; }
.win-b:nth-child(1) { margin-right: 22px; }
.win-b:nth-child(2) { margin-right: 20px; }

.tab-row { height: 19px; display: flex; align-items: flex-start; }
.tabs { display: flex; width: 1451px; height: 19px; margin-left: 3px; flex: none; }
.tab { padding: 0 13px; height: 19px; line-height: 19px; color: #3a3a3a; white-space: nowrap; }
.tab.active { background: #5aa9ee; color: #fff; }
.search { width: 245px; height: 18px; border: 1px solid #cfcfcf; display: flex; align-items: center; justify-content: space-between; padding: 0 6px 0 1px; background: #fff; flex: none; }
.search-t { color: #c8c8c8; font-size: 12px; white-space: nowrap; line-height: 16px; }
.search-i { width: 12px; height: 12px; }
.avatar { width: 16px; height: 16px; margin-left: 9px; }
.uname { color: #111; margin-left: 2px; width: 25px; }
.ti { width: 13px; height: 14px; margin-top: 1px; }
.ti-bell { margin-left: 11px; }
.ti-chat { width: 15px; margin-left: 9px; }
.ti-q { color: #8a8a8a; font: bold 15px "Liberation Sans", sans-serif; margin-left: 7px; width: 9px; }
.ti-qc { margin: 7px 0 0 2px; }
.ti-shirt { margin-left: 8px; }
.ti-box { margin-left: 8px; }

.caret { width: 0; height: 0; border-left: 3px solid transparent; border-right: 3px solid transparent; border-top: 3px solid #666; flex: none; }
.caret.light { border-top-color: #bbb; }

/* ribbon */
.ribbon { height: 98px; display: flex; flex: none; background: linear-gradient(#fff 0, #fff 45%, #e9ecee 100%); border-bottom: 2px solid #8d8f92; }
.grp { display: flex; flex-direction: column; border-right: 1px solid #dde0e2; flex: none; }
.g1 { width: 146px; } .g2 { width: 132px; } .g3 { width: 294px; } .g4 { width: 79px; } .g5 { width: 191px; } .g6 { width: 114px; }
.g-body { height: 76px; display: flex; padding-top: 4px; }
.g-label { height: 20px; line-height: 20px; text-align: center; color: #2b2b2b; }
.g1 .g-label { padding-left: 4px; }
.g2 .g-label { padding-left: 2px; }
.g3 .g-label { padding-left: 6px; }
.g4 .g-label, .g5 .g-label, .g6 .g-label { padding-left: 2px; }
.col { display: flex; flex-direction: column; flex: none; }
.it { display: flex; align-items: center; height: 22.500px; gap: 2px; white-space: nowrap; color: #2b2b2b; }
.ic { width: 16px; height: 16px; }
.it-w { gap: 8px; }
.it.off, .off { color: #c4c4c4; }
.it-c { margin-left: 5px; }
.it.sel { background: #c6d8ef; margin-left: -3px; padding-left: 3px; width: 76px; height: 19px; margin-top: 1px; margin-bottom: 2.500px; }
.large { display: flex; flex-direction: column; align-items: center; flex: none; }
.lg-i { width: 30px; height: 30px; }
.lg1 { width: 30px; margin: 3px 0 0 13px; gap: 5px; }
.lg1 span, .lg2 span { white-space: nowrap; }
.lg2 { width: 26px; margin: 7px 0 0 13px; gap: 7px; }
.lg-i2 { width: 26px; height: 24px; }
.c1-2 { margin-left: 10px; }
.c2-2 { margin-left: 13px; }
.c3-1 { margin-left: 10px; width: 88px; }
.c3-2 { width: 79px; }
.c4-1 { margin-left: 11px; }
.c5-1 { margin-left: 8px; width: 102px; }
.c5-2 .it { gap: 4px; }
.c6-1 { margin-left: 9px; gap: 7px; padding-top: 7px; }
.chk { width: 13px; height: 14px; border: 1px solid #777; border-radius: 3px; background: #fff; flex: none; margin-right: -1px; }
.unit-ic { width: 16px; font: 8px/8px "Liberation Sans", sans-serif; color: #666; letter-spacing: -.3px; }

/* combos */
.combos { height: 29px; flex: none; display: flex; gap: 5px; padding: 4px 0 0 3px; background: #c8cbcf; border-bottom: 1px solid #4c4f52; }
.combo { width: 100px; height: 22px; background: #fff; border: 1px solid #d8d8d8; display: flex; align-items: center; justify-content: space-between; padding: 0 5px 0 3px; line-height: 18px; font-size: 13px; color: #2b2b2b; }
.combo .caret { border-top-width: 4px; }

/* main */
.main { flex: 1; min-height: 0; display: flex; background: #e9eaec; }
.nav { width: 152px; position: relative; border-left: 1px solid #c6c8ca; border-right: 1px solid #c6c8ca; border-bottom: 1px solid #c6c8ca; background: #fff; flex: none; display: flex; flex-direction: column; }
.nav-head { height: 21px; background: #efefef; color: #777; padding-left: 8px; line-height: 20px; border-bottom: 1px solid #cfcfcf; flex: none; }
.nav-tools { height: 29px; background: #f0f0f0; border-bottom: 1px solid #cfcfcf; display: flex; align-items: center; padding-left: 6px; flex: none; }
.pin { width: 13px; height: 11px; margin-right: 74px; }
.nav-btn { width: 25px; height: 25px; margin-right: 4px; border: 1px solid #7db3e8; border-radius: 3px; background: #e9f3fd; display: flex; align-items: center; justify-content: center; }
.nav-btn svg { width: 16px; height: 14px; }
.tree { width: 136px; overflow: hidden; padding-top: 4px; flex: none; }
.tr { height: 24px; display: flex; align-items: center; gap: 6px; padding-left: 44px; white-space: nowrap; color: #222; }
.tr.root { padding-left: 5px; gap: 4px; }
.tr.on { background: linear-gradient(#c6d8ef, #c6d8ef) no-repeat 40px 1px / 96px 21px; }
.fd { width: 15px; height: 14px; }
.vbar { position: absolute; left: 140px; top: 63px; width: 8px; height: 505px; border-radius: 4px; background: #c8c8c8; }
.hbar { position: absolute; left: 10px; top: 831px; width: 98px; height: 8px; border-radius: 4px; background: #c8c8c8; }

.mid { width: 276px; margin-left: 4px; flex: none; display: flex; flex-direction: column; gap: 4px; }
.panel { background: #fff; border: 1px solid #c6c8ca; border-top: 0; display: flex; flex-direction: column; }
.p-top { height: 419px; flex: none; }
.p-bot { flex: 1; min-height: 0; }
.p-head { height: 12px; background: #d2d3d6; position: relative; flex: none; }
.x { position: absolute; right: 2px; top: -2px; font: bold 12px/14px "Liberation Sans", sans-serif; color: #777; }
.p-tabs { height: 22px; display: flex; background: #efefef; border-bottom: 1px solid #cfcfcf; flex: none; }
.p-tab { width: 65px; border-right: 1px solid #cfcfcf; text-align: center; line-height: 21px; background: #e0e0e0; color: #888; }
.p-tab.cur { background: #efefef; color: #2b2b2b; }
.p-tools { height: 29px; background: #f0f0f0; border-bottom: 1px solid #cfcfcf; display: flex; align-items: center; padding-left: 5px; position: relative; flex: none; }
.pt { display: flex; align-items: center; gap: 3px; margin-right: 13px; }
.pt .caret { margin-left: 6px; }
.pt:first-child { margin-right: 9px; }
.p-more { position: absolute; right: 1px; top: 6px; font-size: 8px; color: #666; }
.p-search { height: 20px; border-bottom: 1px solid #cfcfcf; display: flex; align-items: center; justify-content: space-between; padding: 0 5px 0 2px; color: #aaa; flex: none; }
.p-s-i { width: 12px; height: 12px; }
.p-tree { padding-top: 0; }
.pn-root { height: 21px; display: flex; align-items: center; padding-left: 11px; gap: 7px; color: #2b2b2b; }
.tri { width: 0; height: 0; border-bottom: 5px solid #555; border-left: 5px solid transparent; }
.pn-child { margin-left: 40px; width: 81px; height: 21px; background: #c6d8ef; padding-left: 3px; line-height: 21px; }
.layer-tools { height: 30px; background: #efefef; border-bottom: 1px solid #cfcfcf; display: flex; align-items: center; gap: 14px; padding-left: 4px; color: #444; flex: none; }
.lt-head { height: 21px; background: #efefef; display: flex; line-height: 20px; color: #444; flex: none; }
.lt-row { height: 21px; display: flex; width: 238px; }
.lc1, .lc2, .lc3 { display: flex; align-items: center; justify-content: center; border-right: 1px solid #cfcfcf; border-bottom: 1px solid #cfcfcf; flex: none; }
.lc1 { width: 51px; } .lc2 { width: 36px; } .lc3 { width: 151px; }
.lc3.left { justify-content: flex-start; padding-left: 5px; }
.box { width: 14px; height: 14px; border: 1px solid #888; border-radius: 2px; background: #fff; }
.box.on { background: #4f9bf0; border-color: #4f9bf0; }
.box svg { width: 12px; height: 12px; }
.tri-r { width: 0; height: 0; border-left: 5px solid #8a8a8a; border-top: 4px solid transparent; border-bottom: 4px solid transparent; }

.splitter { width: 4px; background: #dcdcdc; position: relative; flex: none; }
.grip { position: absolute; left: 0; top: 372px; width: 4px; height: 100px; background: #5e666c; }

.canvas { width: 1484px; position: relative; background: #000; flex: none; }
.cad { width: 1484px; height: 842px; }
.walls .p { fill: #8f00ff; stroke: #f2e23c; stroke-width: 1; }
.walls .g { fill: #8c8c8c; stroke: #6c6c6c; }
.walls .ol { fill: none; stroke: #b89030; }
.walls .yl { fill: none; stroke: #ffff30; }
.walls .wh { fill: none; stroke: #ffeea0; }
.marks path { stroke: #fff; stroke-width: 1.400; fill: none; }
.ln path { fill: none; stroke: #00c800; stroke-width: 1; }
.lbl text { font-family: Roboto, "Liberation Sans", sans-serif; font-weight: 100; font-size: 80px; fill: #0b9098; stroke: #000; stroke-width: .5px; }
.dim text { font-family: Roboto, "Liberation Sans", sans-serif; font-weight: 100; font-size: 112px; fill: #00e000; stroke: #000; stroke-width: 1.100px; }
.len { font-family: "Noto Sans CJK SC", sans-serif; font-size: 18px; fill: #ffff00; }
.ax-g { stroke: #00e000; stroke-width: 4; }
.ax-gh { fill: #00e000; }
.ax-r { stroke: #f00; stroke-width: 4; }
.ax-rh { fill: #f00; }
.ax-x { font: 100 19px Roboto, sans-serif; fill: #f00; }
.ax-y { font: 100 19px Roboto, sans-serif; fill: #00d000; }
.viewbar { position: absolute; left: 1448px; top: 3px; width: 34px; height: 227px; background: #8f9396; border: 1px solid #b0b3b5; display: flex; flex-direction: column; align-items: center; padding-top: 9px; }
.vb { width: 26px; height: 24px; margin-bottom: 5px; }
.vb-ar { width: 0; height: 0; border-left: 4px solid transparent; border-right: 4px solid transparent; border-top: 3px solid #2f3640; margin: 1px 0 6px; }
.vb-sep { width: 24px; height: 1px; background: #666; margin: 0 0 11px; }
.vb-t { font: 10px "Liberation Sans", sans-serif; fill: #222; }

/* status */
.status { height: 30px; flex: none; background: #dcdcde; border-bottom: 1px solid #fff; display: flex; align-items: center; position: relative; color: #444; }
.st { white-space: nowrap; }
.s-xy { margin-left: 2px; width: 263px; font-size: 13px; word-spacing: 1.500px; }
.s-h1 { width: 83px; letter-spacing: .2px; }
.s-h2 { width: 134px; letter-spacing: .4px; }
.s-0 { width: 102px; }
.s-hide { width: 103px; }
.sb { height: 25px; border: 1px solid #a8a8a8; background: #d8d8da; display: flex; align-items: center; justify-content: center; margin-right: 3px; width: 26px; color: #444; white-space: nowrap; gap: 3px; }
.sb svg { width: 16px; height: 16px; }
.sb.sb-act { width: 36px; background: #fff; border-color: #3d97e8; justify-content: flex-start; padding-left: 3px; gap: 8px; }
.sb-w { width: 36px; }
.sb-t1 { width: 73px; }
.sb-t2 { width: 61px; margin-right: 6px; }
.s-prompt { color: #222; width: 833px; }
.s-fps { letter-spacing: .3px; }

/* taskbar */
.taskbar { height: 40px; flex: none; background: linear-gradient(#34444f, #1b2730 30%, #10191f); display: flex; align-items: center; position: relative; }
.orb { width: 38px; height: 38px; margin-left: 8px; }
.tb-btns { display: flex; gap: 4px; margin-left: 14px; }
.tb { width: 58px; height: 37px; border: 1px solid #6b7276; border-radius: 2px; background: linear-gradient(120deg, #7d868c, #2f3a41 50%, #51585d); display: flex; align-items: center; justify-content: center; }
.tb svg { width: 32px; height: 32px; }
.tb-on { background: linear-gradient(120deg, #dfe3e6, #8a949b 50%, #c4c9cc); border-color: #d8dde0; }
.tb-cad { font: bold 12px "Liberation Sans", sans-serif; fill: #fff; }
.tb-pms { font: bold 8px "Liberation Sans", sans-serif; fill: #dfeefc; }
.tb-pm2 { font: bold 6px "Noto Sans CJK SC", sans-serif; fill: #dfeefc; }
.tray { margin-left: auto; display: flex; align-items: center; color: #eee; }
.tr-i { flex: none; }
.tr-kb { width: 16px; height: 14px; }
.tr-up { width: 10px; margin-left: 9px; margin-top: -4px; }
.tr-up svg { width: 9px; height: 7px; }
.tr-up i { margin: 6px 0 0 1px; width: 0; height: 0; border-left: 3px solid transparent; border-right: 3px solid transparent; border-top: 3px solid #ddd; }
.tr-th { width: 12px; height: 18px; margin-left: 15px; }
.tr-cube { width: 16px; height: 16px; margin-left: 11px; }
.tr-qq { width: 16px; height: 18px; margin-left: 9px; }
.tr-net { width: 16px; height: 16px; margin-left: 9px; }
.tr-vol { width: 16px; height: 14px; margin-left: 9px; }
.clock { width: 120px; margin-left: 5px; display: flex; flex-direction: column; align-items: center; line-height: 18px; font-size: 12px; color: #f0f0f0; white-space: nowrap; padding-left: 2px; letter-spacing: .3px; }
.clock span:first-child { padding-right: 6px; }
.show-desk { width: 14px; height: 38px; border: 1px solid #5e666c; background: linear-gradient(#5c646a, #232c32); }
```
